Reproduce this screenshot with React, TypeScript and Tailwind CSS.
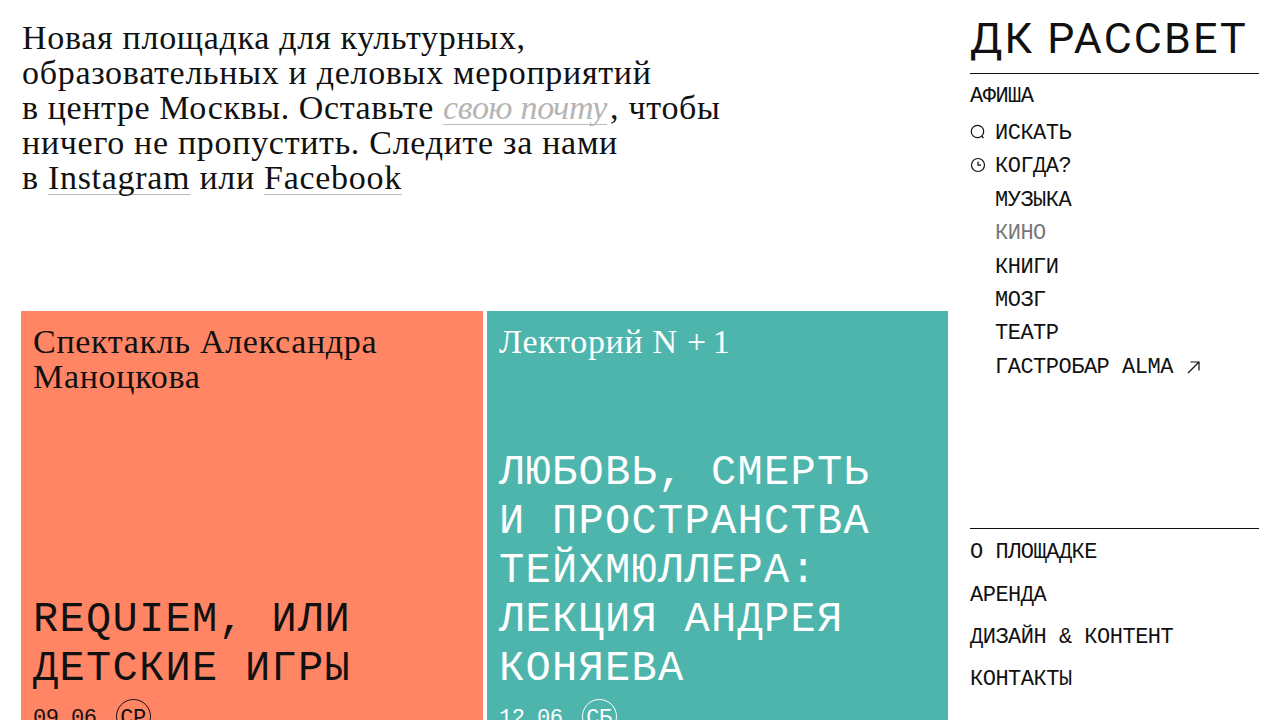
import React from 'react'

const serif = "font-['Liberation_Serif',serif]"
const mono = "font-['Liberation_Mono',monospace]"
const link = 'underline decoration-[#bbb] decoration-1 underline-offset-[5px] [text-decoration-skip-ink:none]'

// Разделы меню афиши
const MENU = ['МУЗЫКА', 'КИНО', 'КНИГИ', 'МОЗГ', 'ТЕАТР']
const FOOTER_MENU = ['О ПЛОЩАДКЕ', 'АРЕНДА', 'ДИЗАЙН & КОНТЕНТ', 'КОНТАКТЫ']

function EventCard({ bg, text, width, kicker, title, date, day }: { bg: string; text: string; width: string; kicker: React.ReactNode[]; title: string[]; date: string; day: string }) {
  return (
    <div className={`h-[430px] shrink-0 px-3 pt-[13px] ${width} ${bg} ${text}`}>
      <div className="flex h-[370px] flex-col justify-between">
        <div className={`text-[34px] leading-[35px] tracking-[0.7px] ${serif}`}>
          {kicker.map((line, i) => (
            <div key={i}>{line}</div>
          ))}
        </div>
        <div className={`text-[42px] leading-[49px] tracking-[1.3px] ${mono}`}>
          {title.map((line) => (
            <div key={line}>{line}</div>
          ))}
        </div>
      </div>
      <div className={`mt-[3px] flex items-center gap-[19px] text-[22px] leading-[35px] tracking-[-0.5px] ${mono}`}>
        <span className="pt-1">{date}</span>
        <span className={`flex h-[35px] w-[35px] items-center justify-center rounded-full border pt-1 ${text === 'text-white' ? 'border-white' : 'border-[#111]'}`}>
          {day}
        </span>
      </div>
    </div>
  )
}

function SearchIcon() {
  return (
    <svg className="-translate-y-0.5" width="16" height="16" viewBox="0 0 16 16" fill="none" stroke="currentColor" strokeWidth="1.2">
      <circle cx="7.5" cy="7.5" r="6.2" />
      <path d="M11.5 12l2 2" />
    </svg>
  )
}

function ClockIcon() {
  return (
    <svg className="-translate-y-0.5" width="16" height="16" viewBox="0 0 16 16" fill="none" stroke="currentColor" strokeWidth="1.2">
      <circle cx="8" cy="8" r="6.5" />
      <path d="M8 4.5V8.2H11" />
    </svg>
  )
}

export default function App() {
  return (
    <div className="flex h-screen w-full overflow-hidden bg-white text-[#111]">
      <main className="w-[970px] shrink-0 pl-[21px]">
        <p className={`h-[311px] whitespace-nowrap pl-px pt-[20px] text-[34px] leading-[35px] tracking-[0.7px] ${serif}`}>
          Новая площадка для культурных,
          <br />
          образовательных и деловых мероприятий
          <br />
          <span className="tracking-[0.6px]">в центре Москвы. Оставьте</span>{' '}
          <a className={`${link} italic tracking-[-0.3px] text-[#b5b5b5]`}>свою почту</a>
          <span className="ml-[3px]">, чтобы</span>
          <br />
          ничего не пропустить. Следите за нами
          <br />в <a className={link}>Instagram</a> или <a className={link}>Facebook</a>
        </p>
        <div className="flex gap-1">
          <EventCard
            bg="bg-[#ff8565]"
            text="text-[#111]"
            width="w-[462px]"
            kicker={['Спектакль Александра', 'Маноцкова']}
            title={['REQUIEM, ИЛИ', 'ДЕТСКИЕ ИГРЫ']}
            date="09.06"
            day="СР"
          />
          <EventCard
            bg="bg-[#4db5ac]"
            text="text-white"
            width="w-[461px]"
            kicker={[
              <>
                Лекторий N <span className="tracking-[-1px]">+ 1</span>
              </>,
            ]}
            title={['ЛЮБОВЬ, СМЕРТЬ', 'И ПРОСТРАНСТВА', 'ТЕЙХМЮЛЛЕРА:', 'ЛЕКЦИЯ АНДРЕЯ', 'КОНЯЕВА']}
            date="12.06"
            day="СБ"
          />
        </div>
      </main>
      <aside className={`flex w-[289px] shrink-0 flex-col tracking-[-0.5px] ${mono}`}>
        <div className="h-[74px] whitespace-nowrap border-b border-[#111] pt-[11px] font-['Roboto',sans-serif] text-[43px] leading-[54px] tracking-[2.2px]">
          ДК РАССВЕТ
        </div>
        <div className="mt-[9px] text-[22px] leading-[28px]">АФИША</div>
        <nav className="mt-[6px] flex flex-col text-[22px] leading-[33.4px]">
          <div className="flex items-center gap-[9px]">
            <SearchIcon />
            ИСКАТЬ
          </div>
          <div className="flex items-center gap-[9px]">
            <ClockIcon />
            КОГДА?
          </div>
          {MENU.map((item) => (
            <div key={item} className={`pl-[25px] ${item === 'КИНО' ? 'text-[#777]' : ''}`}>
              {item}
            </div>
          ))}
          <div className="flex items-center gap-[14px] pl-[25px]">
            ГАСТРОБАР ALMA
            <svg width="13" height="13" viewBox="0 0 13 13" fill="none" stroke="currentColor" strokeWidth="1.2">
              <path d="M1 12L12 1M3.5 1H12V9.5" />
            </svg>
          </div>
        </nav>
        <div className="mt-[144px] flex flex-col border-t border-[#111] pt-[3px] text-[22px] leading-[42.3px]">
          {FOOTER_MENU.map((item) => (
            <div key={item}>{item}</div>
          ))}
        </div>
      </aside>
    </div>
  )
}
